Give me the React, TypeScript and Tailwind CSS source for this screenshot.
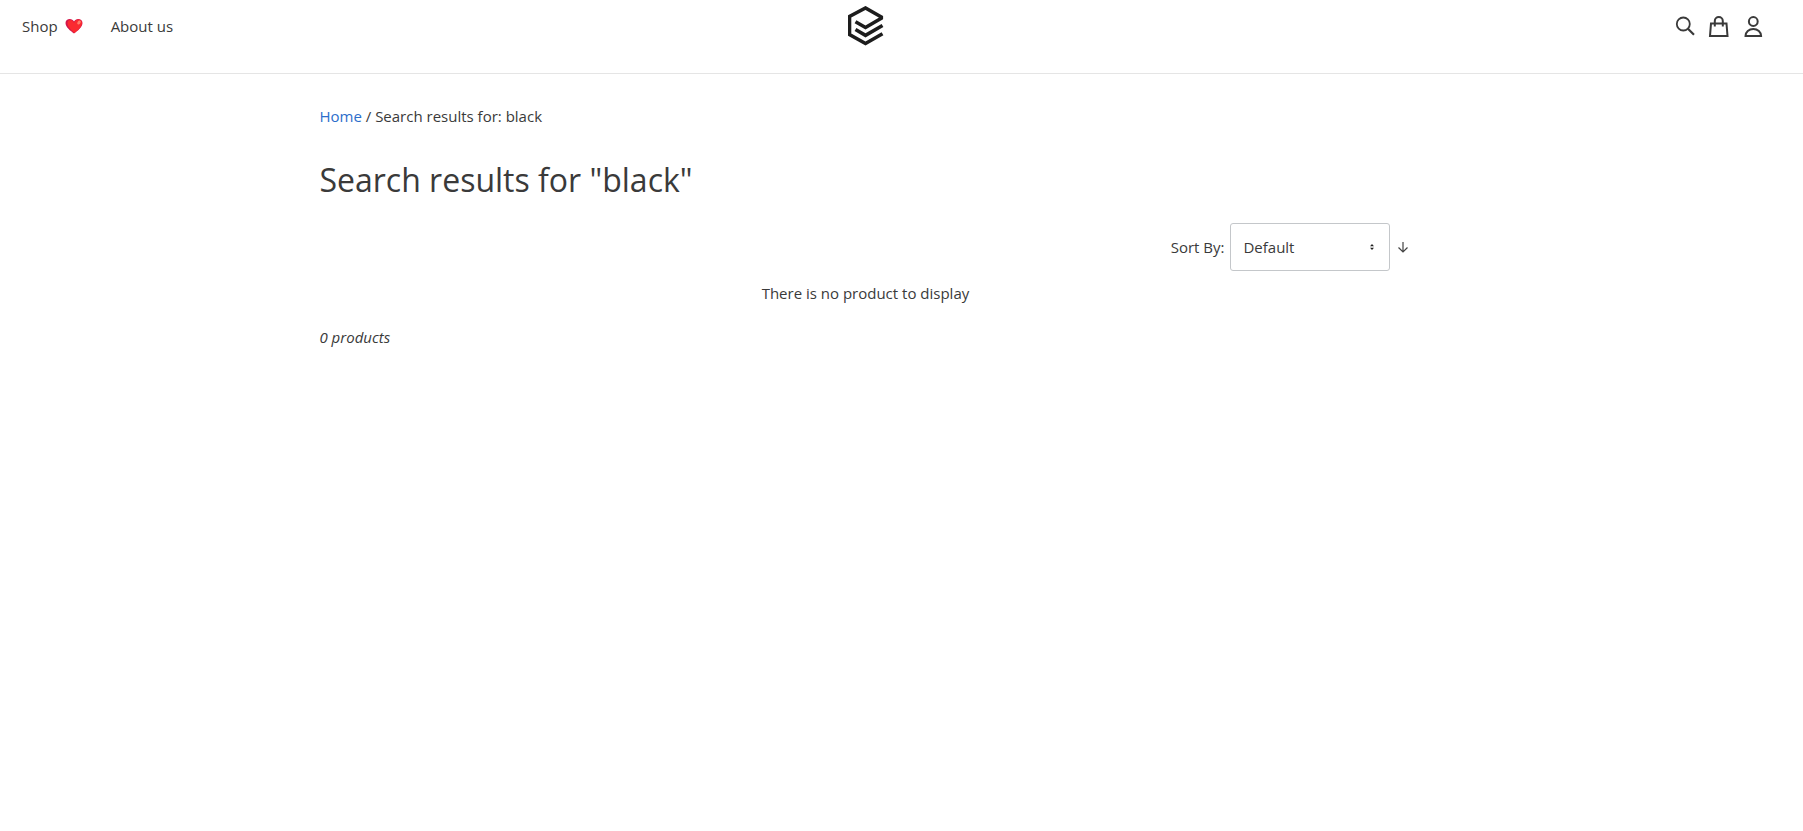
import React from 'react';

function Heart() {
  return (
    <svg className="h-4 w-[18px]" viewBox="0 0 36 32" role="img" aria-label="heart">
      <path
        d="M18 31C11 26 1 18 1 10 1 5 5 2 9.500 2c3.500 0 7 1.800 8.500 5 1.500-3.200 5-5 8.500-5C31 2 35 5 35 10c0 8-10 16-17 21z"
        fill="#d3154a"
      />
      <path
        d="M19 30C13 25 5 18 5 10c0-4 2.500-6 5.500-6C15 4 17 7 18 10c1.500-4 4.500-7 8.500-7 4 0 7.500 3 7.500 7 0 7-9 15-15 20z"
        fill="#fa2b30"
      />
      <ellipse cx="28" cy="9" rx="3" ry="4.500" transform="rotate(35 28 9)" fill="#ff7f6b" />
    </svg>
  );
}

function Logo() {
  return (
    <svg className="h-10 w-9" viewBox="1 0 36 40" fill="none" stroke="#1d1d1d" strokeWidth="3.600">
      <path d="M35.500 27.800 L18.500 37.500 L2.500 28.500 V10.500 L18.500 2 L34.300 11 V12.200 L18.500 21.500 L8.500 15.800" />
      <path d="M8.500 23.500 L18.500 29.300 L35.500 19.500" />
    </svg>
  );
}

const iconButton = 'flex h-6 w-6 cursor-pointer items-center justify-center';

export default function App() {
  return (
    <div className="bg-white font-['Open_Sans','Noto_Sans',sans-serif] text-[15px] leading-6 text-[#3a3a3a]">
      <header className="grid grid-cols-[15fr_auto_16fr] border-b border-[#e5e5e5] pt-1.5 pr-[38px] pb-[27px] pl-[22px]">
        <nav className="flex h-10 items-center gap-7">
          <a href="#shop" className="flex items-center gap-[7px]">
            Shop <Heart />
          </a>
          <a href="#about">About us</a>
        </nav>
        <a href="#home" aria-label="Home page">
          <Logo />
        </a>
        <div className="flex h-10 items-center justify-end gap-2.5">
          <button type="button" aria-label="Search" className={iconButton}>
            <svg className="h-6 w-6" viewBox="0 0 24 24" fill="none" stroke="#3a3a3a" strokeWidth="1.800">
              <circle cx="10.300" cy="10" r="6.500" />
              <path d="M15 14.800l6 6" strokeWidth="2.200" />
            </svg>
          </button>
          <a href="#cart" aria-label="Cart" className={iconButton}>
            <svg className="h-6 w-6" viewBox="0 0 24 24" fill="none" stroke="#3a3a3a" strokeWidth="2">
              <path d="M4 9.500h15.500l1 12.500H3zM7.800 12.500V7a4 4 0 0 1 8 0v5.500" />
            </svg>
          </a>
          <a href="#account" aria-label="Account" className={iconButton}>
            <svg className="h-6 w-6" viewBox="0 0 24 24" fill="none" stroke="#3a3a3a" strokeWidth="2">
              <circle cx="12.300" cy="7.500" r="4.400" />
              <path d="M4.500 22c0-4 3.400-7 7.800-7s7.800 3 7.800 7z" />
            </svg>
          </a>
        </div>
      </header>

      <div className="pr-[4%]">
        <main className="mx-auto max-w-[1092px] pt-[30px]">
          <nav aria-label="Breadcrumb">
            <a href="#home" className="text-[#2c6ecb]">Home</a>
            <span> / </span>
            <span>Search results for: black</span>
          </nav>
          <h1 className="mt-7 text-[32px] leading-12">Search results for "black"</h1>
          <div className="mt-[19px] flex items-center justify-end">
            <label htmlFor="sort" className="mr-1.5">Sort By:</label>
            <div className="relative">
              <select
                id="sort"
                className="h-12 w-40 appearance-none rounded-[3px] border border-[#c4c7ca] bg-white px-3"
              >
                <option>Default</option>
              </select>
              <svg className="pointer-events-none absolute top-5 right-3.5 h-2 w-2" viewBox="0 0 8 8" fill="#222">
                <path d="M4 1l2 2.200H2zM4 7l2-2.200H2z" />
              </svg>
            </div>
            <button type="button" aria-label="Sort direction" className="ml-1 flex w-[17px] cursor-pointer justify-center">
              <svg className="h-3 w-3" viewBox="0 0 12 12" fill="none" stroke="#444" strokeWidth="1.200">
                <path d="M6 1v10M1.500 6.500L6 11l4.500-4.500" />
              </svg>
            </button>
          </div>
          <p className="mt-2.5 text-center">There is no product to display</p>
          <p className="mt-5 italic">0 products</p>
        </main>
      </div>
    </div>
  );
}
